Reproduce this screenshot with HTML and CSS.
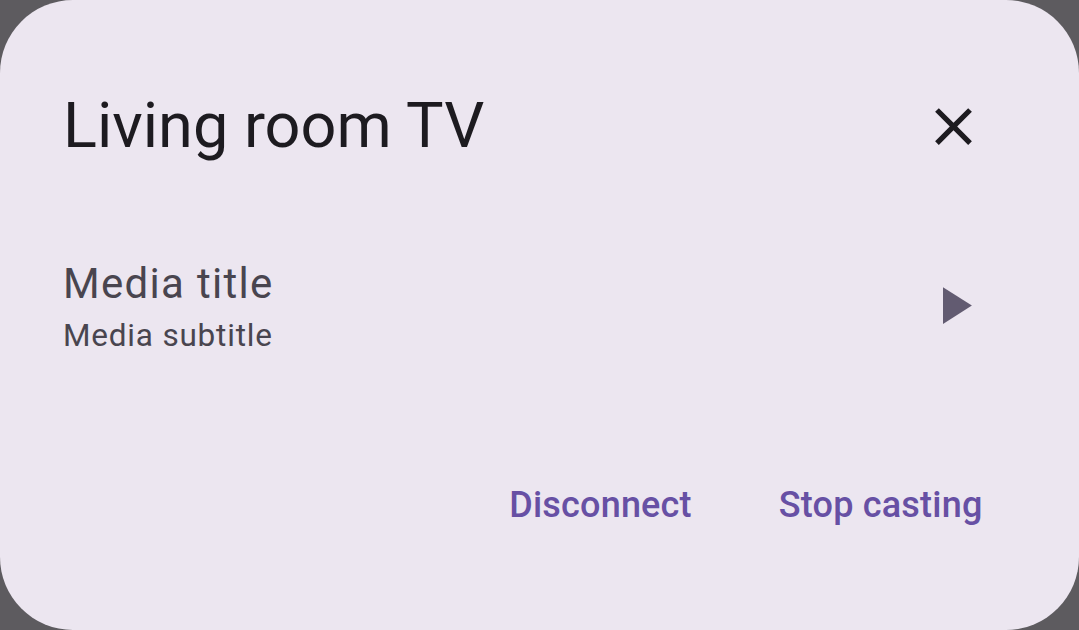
FILE: index.html
```html
<!DOCTYPE html>
<html>
<head>
<meta charset="utf-8">
<link rel="stylesheet" href="styles.css">
</head>
<body>
<div class="dialog">
  <div class="header">
    <h1 class="title">Living room TV</h1>
    <button class="icon-btn" aria-label="Close">
      <svg class="icon close" viewBox="0 0 24 24"><path d="M19 6.41L17.59 5 12 10.59 6.41 5 5 6.41 10.59 12 5 17.59 6.41 19 12 13.41 17.59 19 19 17.59 13.41 12z"/></svg>
    </button>
  </div>
  <div class="media">
    <div class="media-text">
      <div class="media-title">Media title</div>
      <div class="media-subtitle">Media subtitle</div>
    </div>
    <button class="icon-btn" aria-label="Play">
      <svg class="icon play" viewBox="0 0 24 24"><path d="M8 5v14l11-7z"/></svg>
    </button>
  </div>
  <div class="actions">
    <button class="text-btn">Disconnect</button>
    <button class="text-btn">Stop casting</button>
  </div>
</div>
</body>
</html>
```
FILE: styles.css
```css
html, body {
  margin: 0;
  padding: 0;
  background: #5d5b5f;
  width: 1079px;
  height: 630px;
  overflow: hidden;
}
.dialog {
  box-sizing: border-box;
  width: 1079px;
  height: 630px;
  background: #ece6f0;
  border-radius: 73px;
  padding: 63px 63px 0 63px;
  font-family: Roboto, "Liberation Sans", sans-serif;
  display: flex;
  flex-direction: column;
}
.header {
  display: flex;
  align-items: center;
  justify-content: space-between;
  height: 126px;
}
.title {
  margin: 0;
  font-size: 63px;
  font-weight: 400;
  line-height: 84px;
  color: #1d1b20;
}
.icon-btn {
  width: 126px;
  height: 126px;
  border: 0;
  padding: 0;
  background: transparent;
  display: flex;
  align-items: center;
  justify-content: center;
}
.icon {
  width: 63px;
  height: 63px;
}
.close { fill: #1d1b20; }
.play { fill: #625b71; }
.media {
  margin-top: 53px;
  display: flex;
  align-items: center;
  justify-content: space-between;
}
.media-text {
  color: #49454f;
  padding-bottom: 6px;
}
.media-title {
  font-size: 42px;
  line-height: 67px;
  letter-spacing: 1.3px;
}
.media-subtitle {
  font-size: 31.5px;
  line-height: 38px;
  letter-spacing: 0.8px;
}
.actions {
  margin-top: 85px;
  display: flex;
  justify-content: flex-end;
  gap: 24px;
  padding-right: 2px;
}
.text-btn {
  height: 105px;
  padding: 0 31.5px;
  border: 0;
  background: transparent;
  font-family: Roboto, "Liberation Sans", sans-serif;
  font-weight: 500;
  font-size: 36px;
  line-height: 52.5px;
  letter-spacing: 0.2px;
  color: #6750a4;
}
```
